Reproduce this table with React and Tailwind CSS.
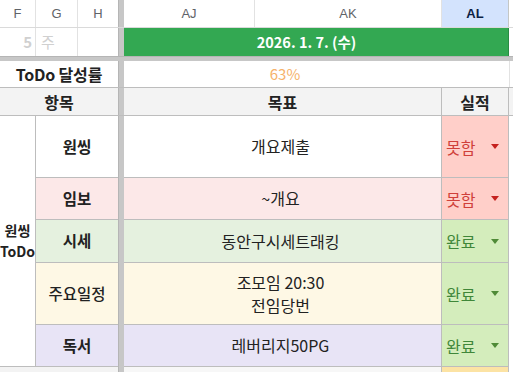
import React from "react";

const KR = { fontFamily: '"Noto Sans CJK KR", "Noto Sans", sans-serif' };

const rows = [
  { label: "원씽", h: "h-[62px]", bg: "bg-white", text: ["개요제출"], status: "못함", lw: "font-bold" },
  { label: "임보", h: "h-[42px]", bg: "bg-[#fce8e8]", text: ["~개요"], status: "못함", lw: "font-bold" },
  { label: "시세", h: "h-[43px]", bg: "bg-[#e5f1df]", text: ["동안구시세트래킹"], status: "완료", lw: "font-bold" },
  { label: "주요일정", h: "h-[62px]", bg: "bg-[#fef8e5]", text: ["조모임 20:30", "전임당번"], status: "완료", lw: "font-medium" },
  { label: "독서", h: "h-[42px]", bg: "bg-[#e8e4f6]", text: ["레버리지50PG"], status: "완료", lw: "font-bold" },
];

const Bar = () => <div className="w-[6px] shrink-0 bg-[#c7c7c7] border-l border-[#b5b5b5]" />;

const Status = ({ value }) => {
  const bad = value === "못함";
  return (
    <div
      className={`w-[67px] shrink-0 flex items-center justify-between pl-[4px] pr-[9px] border-r border-b border-[#bdbdbd] ${
        bad ? "bg-[#ffcfc9] text-[#d0403a]" : "bg-[#d4edbc] text-[#3f8739]"
      }`}
    >
      <span className="text-[16px]">{value}</span>
      <svg width="8" height="5" viewBox="0 0 8 5">
        <path d="M0 0h8L4 5z" fill={bad ? "#c5221f" : "#4f8a37"} />
      </svg>
    </div>
  );
};

export default function App() {
  return (
    <div className="w-[513px] h-[372px] overflow-hidden bg-white text-[#222]" style={KR}>
      {/* column header */}
      <div className="flex h-[28px] border-b border-[#dadada] text-[13px] text-[#5f6368]" style={{ fontFamily: '"Liberation Sans", Arial, sans-serif' }}>
        <div className="w-[36px] flex items-center justify-center border-r border-[#e2e2e2]">F</div>
        <div className="w-[42px] flex items-center justify-center border-r border-[#e2e2e2]">G</div>
        <div className="w-[40px] flex items-center justify-center">H</div>
        <Bar />
        <div className="w-[131px] flex items-center justify-center border-r border-[#e2e2e2]">AJ</div>
        <div className="w-[187px] flex items-center justify-center border-r border-[#e2e2e2]">AK</div>
        <div className="w-[67px] flex items-center justify-center bg-[#d3e3fd] font-bold text-[#0b1f44] border-r border-[#c4c7c5]">AL</div>
        <div className="flex-1" />
      </div>

      {/* week row */}
      <div className="flex h-[28px]">
        <div className="w-[36px] flex items-center justify-end pr-[3px] border-r border-[#e2e2e2] font-bold text-[15px] text-[#d0d0d0]">5</div>
        <div className="w-[42px] flex items-center pl-[5px] border-r border-[#e2e2e2] text-[15px] text-[#d0d0d0]">주</div>
        <div className="w-[40px]" />
        <Bar />
        <div className="w-[385px] flex items-center justify-center pr-[19px] bg-[#33a852] border-r border-[#2a8c44] text-white font-bold text-[14.5px]">
          2026. 1. 7. (수)
        </div>
        <div className="flex-1" />
      </div>

      <div className="h-[5px] bg-[#c7c7c7] border-t border-[#b5b5b5]" />

      {/* achievement row */}
      <div className="flex h-[27px] border-b border-[#bdbdbd]">
        <div className="w-[118px] flex items-center justify-center font-bold text-[16px] tracking-[-0.2px]">ToDo 달성률</div>
        <Bar />
        <div className="w-[385px] flex items-center justify-center pr-[63px] text-[15px] text-[#f6b26b]">63%</div>
        <div className="flex-1 border-l border-[#e2e2e2]" />
      </div>

      {/* item header row */}
      <div className="flex h-[28px] bg-[#f3f3f3] border-b border-[#bdbdbd] font-bold text-[16px]">
        <div className="w-[118px] flex items-center justify-center">항목</div>
        <Bar />
        <div className="w-[318px] flex items-center justify-center border-r border-[#bdbdbd]">목표</div>
        <div className="w-[67px] flex items-center justify-center border-r border-[#bdbdbd]">실적</div>
        <div className="flex-1" />
      </div>

      {/* body */}
      <div className="flex">
        <div className="w-[36px] shrink-0 flex items-center justify-center border-r border-b border-[#bdbdbd] font-bold text-[14px] leading-[21px] whitespace-nowrap text-center">
          <p>
            원씽
            <br />
            ToDo
          </p>
        </div>
        <div className="flex flex-col">
          {rows.map((r) => (
            <div key={r.label} className={`flex ${r.h}`}>
              <div className={`w-[82px] shrink-0 flex items-center justify-center border-b border-[#bdbdbd] text-[15.5px] ${r.lw} ${r.bg}`}>
                {r.label}
              </div>
              <Bar />
              <div className={`w-[318px] shrink-0 flex items-center justify-center pr-[4px] border-r border-b border-[#bdbdbd] text-[16px] leading-[23px] text-center ${r.bg}`}>
                <p>
                  {r.text.map((t, i) => (
                    <React.Fragment key={t}>
                      {i > 0 && <br />}
                      {t}
                    </React.Fragment>
                  ))}
                </p>
              </div>
              <Status value={r.status} />
              <div className="flex-1" />
            </div>
          ))}
        </div>
      </div>

      {/* next row, partly visible */}
      <div className="flex h-[10px]">
        <div className="w-[118px] bg-[#f3f3f3]" />
        <Bar />
        <div className="w-[318px] bg-[#f7f7f7] border-r border-[#bdbdbd]" />
        <div className="w-[67px] bg-[#fce3a4] border-r border-[#bdbdbd]" />
        <div className="flex-1" />
      </div>
    </div>
  );
}
